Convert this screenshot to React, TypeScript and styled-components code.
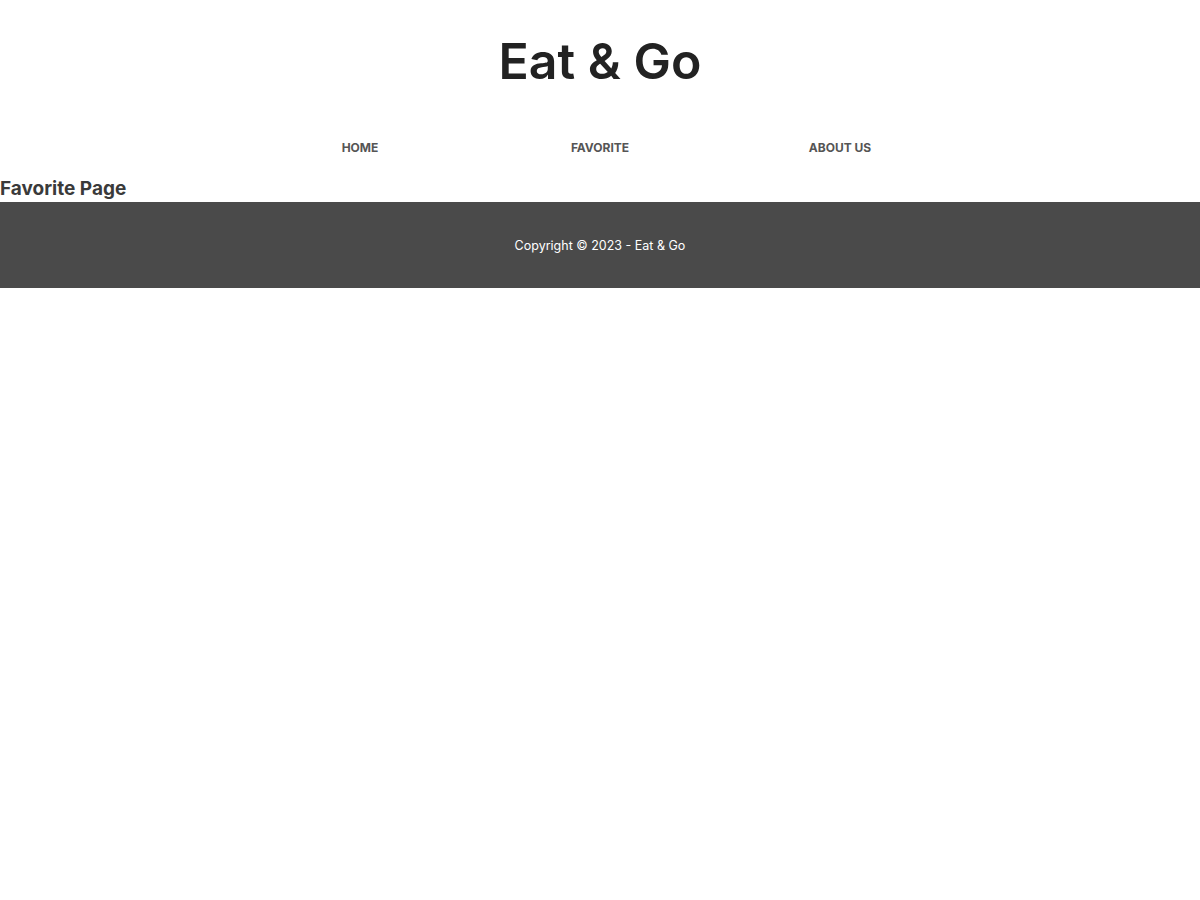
import React from "react";
import styled, { createGlobalStyle } from "styled-components";

const Global = createGlobalStyle`
  html, body { margin: 0; padding: 0; background: #fff; }
  body { font-family: Inter, "Open Sans", sans-serif; }
`;

const Header = styled.header`
  display: flex;
  flex-direction: column;
  align-items: center;
`;

const Title = styled.h1`
  margin: 0;
  height: 120px;
  line-height: 122px;
  font-size: 50px;
  font-weight: 600;
  color: #222;
  letter-spacing: 0;
`;

const Nav = styled.nav`
  width: 720px;
  display: grid;
  grid-template-columns: repeat(3, 1fr);
  height: 54px;
`;

const NavLink = styled.a`
  display: flex;
  align-items: center;
  justify-content: center;
  font-size: 12px;
  font-weight: 700;
  color: #555;
  text-decoration: none;
  text-transform: uppercase;
`;

const PageTitle = styled.h2`
  margin: 0;
  height: 28px;
  line-height: 30px;
  font-size: 19px;
  font-weight: 700;
  color: #3a3a3a;
`;

const Footer = styled.footer`
  height: 86px;
  background: #4a4a4a;
  display: flex;
  align-items: center;
  justify-content: center;
  color: #fff;
  font-size: 12.5px;
`;

export default function App() {
  return (
    <>
      <Global />
      <Header>
        <Title>Eat &amp; Go</Title>
        <Nav>
          <NavLink href="#">Home</NavLink>
          <NavLink href="#">Favorite</NavLink>
          <NavLink href="#">About Us</NavLink>
        </Nav>
      </Header>
      <main>
        <PageTitle>Favorite Page</PageTitle>
      </main>
      <Footer>Copyright © 2023 - Eat &amp; Go</Footer>
    </>
  );
}
